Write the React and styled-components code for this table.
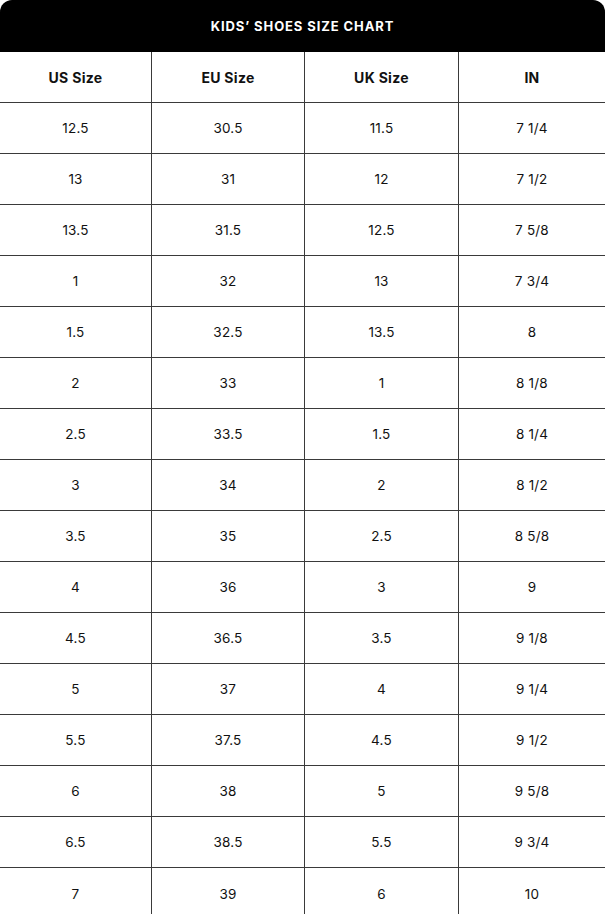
import React from 'react';
import styled, { createGlobalStyle } from 'styled-components';

const rows = [
  ['12.5', '30.5', '11.5', '7 1/4'],
  ['13', '31', '12', '7 1/2'],
  ['13.5', '31.5', '12.5', '7 5/8'],
  ['1', '32', '13', '7 3/4'],
  ['1.5', '32.5', '13.5', '8'],
  ['2', '33', '1', '8 1/8'],
  ['2.5', '33.5', '1.5', '8 1/4'],
  ['3', '34', '2', '8 1/2'],
  ['3.5', '35', '2.5', '8 5/8'],
  ['4', '36', '3', '9'],
  ['4.5', '36.5', '3.5', '9 1/8'],
  ['5', '37', '4', '9 1/4'],
  ['5.5', '37.5', '4.5', '9 1/2'],
  ['6', '38', '5', '9 5/8'],
  ['6.5', '38.5', '5.5', '9 3/4'],
  ['7', '39', '6', '10'],
];

const headers = ['US Size', 'EU Size', 'UK Size', 'IN'];

const App = () => (
  <>
    <GlobalStyle />
    <Chart>
      <Title>KIDS’ SHOES SIZE CHART</Title>
      <Row>
        {headers.map((h) => (
          <Cell key={h} head>
            {h}
          </Cell>
        ))}
      </Row>
      {rows.map((r) => (
        <Row key={r[0]}>
          {r.map((v, i) => (
            <Cell key={i}>{v}</Cell>
          ))}
        </Row>
      ))}
    </Chart>
  </>
);

const GlobalStyle = createGlobalStyle`
  body {
    margin: 0;
    background: #fff;
    font-family: "Inter", "Liberation Sans", sans-serif;
  }
`;

const Chart = styled.div`
  width: 605px;
  border-radius: 12px;
  overflow: hidden;
  background: #fff;
`;

const Title = styled.div`
  height: 52px;
  background: #000;
  color: #fff;
  display: flex;
  align-items: center;
  justify-content: center;
  font-size: 13px;
  font-weight: 700;
  letter-spacing: 0.9px;
`;

const Row = styled.div`
  display: grid;
  grid-template-columns: 151px 153px 154px 1fr;
  height: 51px;
  border-bottom: 1px solid #3a3a3a;
  box-sizing: border-box;
  &:last-child {
    border-bottom: none;
  }
`;

const Cell = styled.div`
  display: flex;
  align-items: center;
  justify-content: center;
  color: #111;
  font-size: ${(p) => (p.head ? '14px' : '13.5px')};
  font-weight: ${(p) => (p.head ? 700 : 400)};
  letter-spacing: ${(p) => (p.head ? '0.3px' : '0.2px')};
  border-left: 1px solid #3a3a3a;
  &:first-child {
    border-left: none;
  }
`;

export default App;
